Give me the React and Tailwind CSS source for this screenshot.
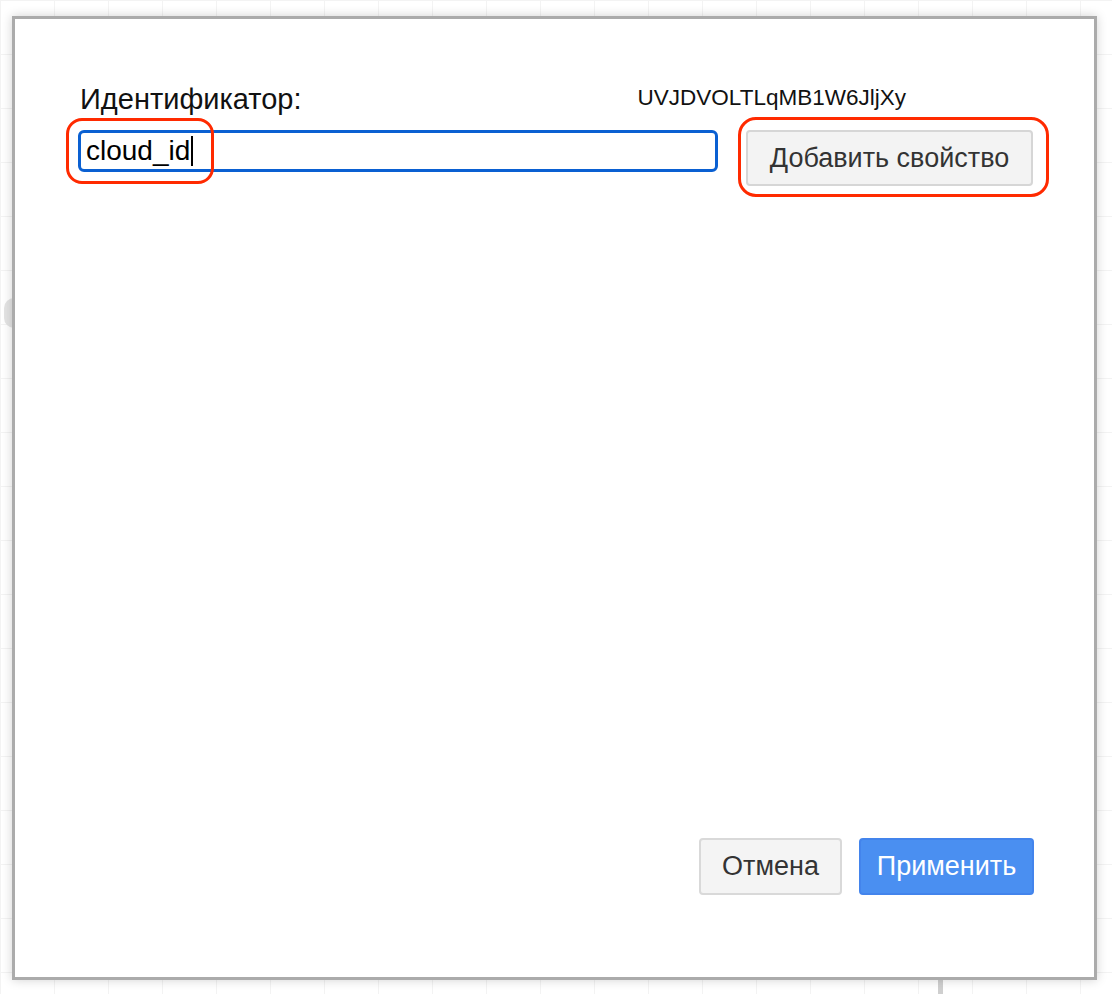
import React from "react";

const font = { fontFamily: '"Liberation Sans", Arial, sans-serif' };

const GridBackdrop = () => (
  <div className="absolute inset-0 bg-white bg-[linear-gradient(#f3f3f3_1px,transparent_1px),linear-gradient(90deg,#f3f3f3_1px,transparent_1px)] bg-[length:54px_54px]">
    <div className="absolute left-[4px] top-[298px] w-[20px] h-[30px] rounded-full bg-[#e4e4e4]"></div>
    <div className="absolute left-[938px] top-[970px] w-[5px] h-[30px] bg-[#cfcfcf]"></div>
  </div>
);

const Dialog = () => {
  return (
    <div className="relative w-[1085px] h-[964px] bg-white border-[3px] border-[#ababab] shadow-[0_0_10px_rgba(0,0,0,0.18)] flex flex-col">
      {/* Header row */}
      <div className="flex items-end justify-between pl-[65px] pr-[188px] pt-[64px]">
        <span className="text-[29px] leading-[32px] text-[#111]">Идентификатор:</span>
        <span className="text-[22.5px] leading-[26px] text-[#111] pb-[4px]">UVJDVOLTLqMB1W6JljXy</span>
      </div>

      {/* Input row */}
      <div className="flex items-start pl-[63px] pt-[15px]">
        <div className="relative">
          <div className="w-[640px] h-[42px] rounded-[6px] border-[3px] border-[#0a60d2] flex items-center pl-[5px]">
            <span className="text-[28px] leading-[30px] text-black">cloud_id</span>
            <span className="w-[2px] h-[30px] bg-black ml-[1px]"></span>
          </div>
          <div className="absolute left-[-12px] top-[-12px] w-[148px] h-[66px] rounded-[16px] border-[3px] border-[#ff2a00]"></div>
        </div>

        <div className="relative ml-[28px]">
          <button className="w-[287px] h-[56px] rounded-[4px] bg-[#f3f3f3] border-2 border-[#d6d6d6] text-[27px] text-[#333]">
            Добавить свойство
          </button>
          <div className="absolute left-[-8px] top-[-13px] w-[311px] h-[80px] rounded-[18px] border-[3px] border-[#ff2a00]"></div>
        </div>
      </div>

      <div className="flex-1"></div>

      {/* Footer */}
      <div className="flex justify-end gap-[17px] pr-[60px] pb-[82px]">
        <button className="w-[143px] h-[57px] rounded-[4px] bg-[#f4f4f4] border-2 border-[#d9d9d9] text-[27px] text-[#333]">
          Отмена
        </button>
        <button className="w-[175px] h-[57px] rounded-[4px] bg-[#4a8ff1] border-2 border-[#4384ec] text-[27px] text-white">
          Применить
        </button>
      </div>
    </div>
  );
};

export default function App() {
  return (
    <div className="relative w-[1112px] h-[994px] overflow-hidden" style={font}>
      <GridBackdrop />
      <div className="relative pl-[12px] pt-[16px]">
        <Dialog />
      </div>
    </div>
  );
}
